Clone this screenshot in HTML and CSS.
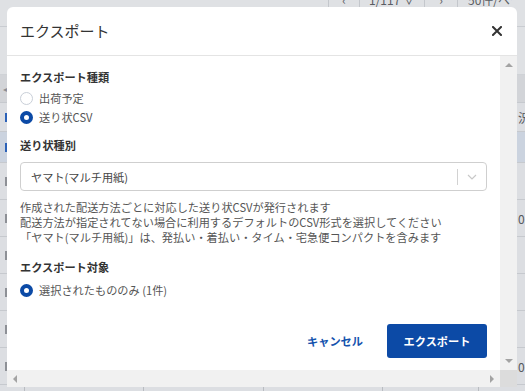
FILE: index.html
```html
<!DOCTYPE html>
<html lang="ja">
<head>
    <meta charset="UTF-8">
    <title>エクスポート</title>
    <link rel="stylesheet" href="styles.css">
</head>
<body>

<div class="page">
    <div class="toolbar">
        <span class="pg prev">‹</span>
        <span class="pg num">1/117 ∨</span>
        <span class="pg next">›</span>
        <span class="pg size">50件/ページ</span>
    </div>
    <div class="filters"></div>
    <div class="thead"><span class="left-arrow">◂</span></div>
    <div class="row"><span class="mark blue"></span><span class="tail">況</span></div>
    <div class="row selected"><span class="mark blue"></span></div>
    <div class="row tall"><span class="mark"></span></div>
    <div class="row tall"><span class="mark"></span><span class="tail">0</span></div>
    <div class="row tall"><span class="mark"></span></div>
    <div class="row tall"><span class="mark"></span></div>
    <div class="row tall"><span class="mark"></span></div>
    <div class="row tall"><span class="mark"></span><span class="tail">0</span></div>
    <div class="row tall cols">
        <span class="c c1"></span><span class="c c2"></span><span class="c c3"></span><span class="c c4"></span><span class="c c5"></span>
    </div>
</div>

<div class="modal">
    <div class="modal-header">
        <h2>エクスポート</h2>
        <button class="close">
            <svg width="10" height="10" viewBox="0 0 10 10">
                <path d="M1 1 L9 9 M9 1 L1 9" stroke="#333" stroke-width="2" stroke-linecap="square"/>
            </svg>
        </button>
    </div>
    <div class="modal-body">
        <div class="content">
            <h3>エクスポート種類</h3>
            <div class="radios first">
                <label class="radio"><span class="dot"></span>出荷予定</label>
                <label class="radio"><span class="dot on"></span>送り状CSV</label>
            </div>

            <h3 class="gap">送り状種別</h3>
            <div class="select">
                <span class="value">ヤマト(マルチ用紙)</span>
                <span class="sep"></span>
                <span class="chev">
                    <svg width="10" height="6" viewBox="0 0 10 6">
                        <path d="M1 1 L5 5 L9 1" fill="none" stroke="#c8c8c8" stroke-width="1.2"/>
                    </svg>
                </span>
            </div>
            <p class="help">
                作成された配送方法ごとに対応した送り状CSVが発行されます<br>
                配送方法が指定されてない場合に利用するデフォルトのCSV形式を選択してください<br>
                「ヤマト(マルチ用紙)」は、発払い・着払い・タイム・宅急便コンパクトを含みます
            </p>

            <h3 class="gap-lg">エクスポート対象</h3>
            <div class="radios second">
                <label class="radio"><span class="dot on"></span>選択されたもののみ (1件)</label>
            </div>

            <div class="actions">
                <button class="btn-cancel">キャンセル</button>
                <button class="btn-export">エクスポート</button>
            </div>
        </div>
        <div class="vscroll">
            <span class="arrow up"></span>
            <span class="arrow down"></span>
        </div>
        <div class="hscroll">
            <span class="arrow left"></span>
            <span class="arrow right"></span>
        </div>
        <div class="corner"></div>
    </div>
</div>

</body>
</html>
```

FILE: styles.css
```css
* {
    margin: 0;
    padding: 0;
    box-sizing: border-box;
}

html {
    overflow: hidden;
}

body {
    width: 525px;
    height: 391px;
    overflow: hidden;
    background: #d6d8dc;
    font-family: "Noto Sans CJK JP", "Noto Sans", sans-serif;
}

/* background page behind the overlay */
.page {
    margin-top: -10px;
    height: 401px;
    overflow: hidden;
}

.toolbar {
    height: 37px;
    display: flex;
    justify-content: flex-end;
    background: #dfe1e4;
    border-bottom: 1px solid #c9ccd1;
}

.toolbar .pg {
    height: 100%;
    border-left: 1px solid #c4c7cc;
    font-size: 12px;
    line-height: 20px;
    color: #5a5d62;
    text-align: center;
}

.toolbar .prev { width: 31px; }
.toolbar .num { width: 65px; }
.toolbar .next { width: 33px; }
.toolbar .size { width: 68px; text-align: left; padding-left: 10px; }

.filters {
    height: 48px;
    background: #dfe1e4;
    border-bottom: 1px solid #cfd2d6;
}

.thead {
    height: 28px;
    background: #d2d4d8;
    border-bottom: 1px solid #c6c9ce;
    display: flex;
    align-items: center;
}

.left-arrow {
    font-size: 8px;
    color: #8a8d92;
    padding-left: 3px;
}

.row {
    position: relative;
    height: 29px;
    border-bottom: 1px solid #c6c9ce;
    background: #dcdee2;
}

.row.selected {
    height: 31px;
    background: #cbd3df;
}

.row.tall {
    height: 37px;
}

.mark {
    position: absolute;
    left: 5px;
    top: 50%;
    width: 2px;
    height: 9px;
    margin-top: -4px;
    background: #8d9096;
}

.mark.blue {
    background: #2c62b8;
}

.tail {
    position: absolute;
    left: 518px;
    top: 50%;
    transform: translateY(-50%);
    font-size: 12px;
    color: #55585d;
}

.cols {
    display: flex;
}

.cols .c {
    height: 100%;
    border-right: 1px solid #b9bcc1;
}

.c1 { width: 25px; }
.c2 { width: 119px; }
.c3 { width: 120px; }
.c4 { width: 119px; }
.c5 { width: 96px; }

/* modal */
.modal {
    position: absolute;
    left: 7px;
    top: 7px;
    width: 510px;
    height: 380px;
    background: #fff;
    border-radius: 6px 6px 0 0;
    overflow: hidden;
    display: flex;
    flex-direction: column;
}

.modal-header {
    height: 49px;
    flex-shrink: 0;
    display: flex;
    align-items: center;
    justify-content: space-between;
    padding: 0 15px 0 13px;
    border-bottom: 1px solid #e4e4e4;
}

.modal-header h2 {
    font-size: 15px;
    font-weight: normal;
    color: #333;
    line-height: 20px;
}

.close {
    border: 0;
    background: none;
    width: 10px;
    height: 10px;
    display: flex;
}

.modal-body {
    flex: 1;
    display: grid;
    grid-template-columns: 493px 17px;
    grid-template-rows: 314px 17px;
}

.content {
    padding: 13px 13px 0 13px;
    font-size: 11.2px;
    color: #555;
}

.content h3 {
    font-size: 11.2px;
    font-weight: bold;
    color: #333;
    line-height: 16px;
}

.content h3.gap {
    margin-top: 10px;
}

.content h3.gap-lg {
    margin-top: 14px;
}

.radios.first {
    margin-top: 4px;
}

.radios.second {
    margin-top: 6px;
}

.radio {
    display: flex;
    align-items: center;
    height: 19px;
    gap: 6px;
    line-height: 19px;
    color: #555;
}

.dot {
    width: 13px;
    height: 13px;
    border-radius: 50%;
    border: 1px solid #c9cfd8;
    background: #fff;
}

.dot.on {
    border: 4px solid #0c4aa6;
}

.select {
    margin-top: 9px;
    height: 29px;
    border: 1px solid #cfcfcf;
    border-radius: 4px;
    display: flex;
    align-items: center;
}

.select .value {
    flex: 1;
    padding-left: 10px;
    color: #444;
}

.select .sep {
    width: 1px;
    height: 16px;
    background: #d2d2d2;
}

.select .chev {
    width: 28px;
    display: flex;
    justify-content: center;
}

.help {
    margin-top: 9px;
    line-height: 15px;
    color: #555;
}

.actions {
    margin-top: 24px;
    display: flex;
    justify-content: flex-end;
    gap: 12px;
}

.actions button {
    height: 34px;
    border: 0;
    font-family: inherit;
    font-size: 11.2px;
    font-weight: bold;
}

.btn-cancel {
    width: 80px;
    background: none;
    color: #1452ad;
}

.btn-export {
    width: 100px;
    background: #0c4aa6;
    color: #fff;
    border-radius: 3px;
}

.vscroll {
    background: #f1f1f1;
    display: flex;
    flex-direction: column;
    justify-content: space-between;
    align-items: center;
    padding: 7px 0;
}

.hscroll {
    background: #f1f1f1;
    display: flex;
    justify-content: space-between;
    align-items: center;
    padding: 0 6px;
}

.corner {
    background: #dcdcdc;
}

.arrow {
    width: 0;
    height: 0;
    border: 4px solid transparent;
}

.arrow.up {
    border-bottom-color: #a3a3a3;
    border-top-width: 0;
}

.arrow.down {
    border-top-color: #a3a3a3;
    border-bottom-width: 0;
}

.arrow.left {
    border-right-color: #a3a3a3;
    border-left-width: 0;
}

.arrow.right {
    border-left-color: #a3a3a3;
    border-right-width: 0;
}
```
